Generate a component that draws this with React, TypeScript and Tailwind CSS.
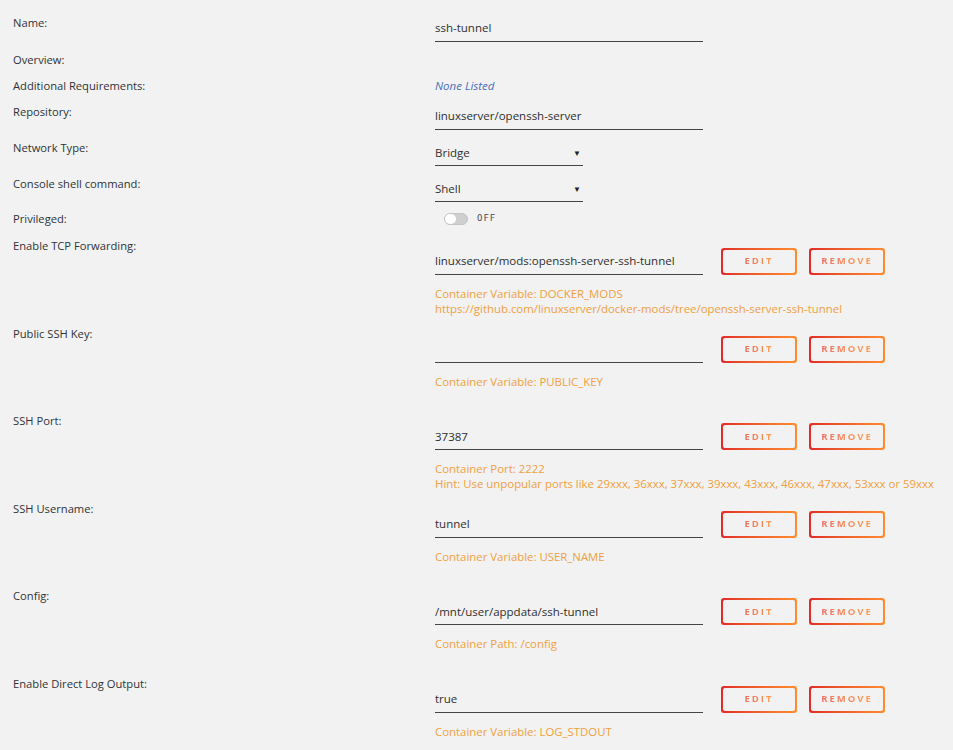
import React from "react";

const font = { fontFamily: '"Open Sans", "Noto Sans", sans-serif' };

type VarRow = {
  label: string;
  value: string;
  notes: string[];
};

const varRows: VarRow[] = [
  {
    label: "Enable TCP Forwarding:",
    value: "linuxserver/mods:openssh-server-ssh-tunnel",
    notes: [
      "Container Variable: DOCKER_MODS",
      "https://github.com/linuxserver/docker-mods/tree/openssh-server-ssh-tunnel",
    ],
  },
  { label: "Public SSH Key:", value: "", notes: ["Container Variable: PUBLIC_KEY"] },
  {
    label: "SSH Port:",
    value: "37387",
    notes: [
      "Container Port: 2222",
      "Hint: Use unpopular ports like 29xxx, 36xxx, 37xxx, 39xxx, 43xxx, 46xxx, 47xxx, 53xxx or 59xxx",
    ],
  },
  { label: "SSH Username:", value: "tunnel", notes: ["Container Variable: USER_NAME"] },
  { label: "Config:", value: "/mnt/user/appdata/ssh-tunnel", notes: ["Container Path: /config"] },
  { label: "Enable Direct Log Output:", value: "true", notes: ["Container Variable: LOG_STDOUT"] },
];

function Label({ children }: { children: React.ReactNode }) {
  return <div className="w-[422px] shrink-0 text-[11.2px] leading-4 text-[#2f3238]">{children}</div>;
}

function TextInput({ value }: { value: string }) {
  return (
    <div className="w-[268px] h-[27px] flex items-center border-b border-[#444] text-[11.5px] text-[#2f2f2f]">
      {value}
    </div>
  );
}

function Select({ value }: { value: string }) {
  return (
    <div className="w-[148px] h-[26px] flex items-center justify-between border-b border-[#444] text-[11.5px] text-[#2f2f2f]">
      <span>{value}</span>
      <span className="text-[8px] text-[#222] pr-[2px]">▼</span>
    </div>
  );
}

function GradButton({ text }: { text: string }) {
  return (
    <div className="w-[76px] h-[27px] rounded-[3px] p-[2px] bg-gradient-to-r from-[#e22828] to-[#ff8c2f]">
      <div className="w-full h-full rounded-[2px] bg-[#f2f2f2] flex items-center justify-center">
        <span className="text-[9.5px] font-bold tracking-[2px] bg-gradient-to-r from-[#f07060] to-[#ffa050] bg-clip-text text-transparent">
          {text}
        </span>
      </div>
    </div>
  );
}

export default function App() {
  return (
    <div className="min-h-screen bg-[#f2f2f2] pl-[13px] pt-[15px]" style={font}>
      <div className="flex h-[37px]">
        <Label>Name:</Label>
        <TextInput value="ssh-tunnel" />
      </div>
      <div className="flex h-[26px]">
        <Label>Overview:</Label>
      </div>
      <div className="flex h-[26px]">
        <Label>Additional Requirements:</Label>
        <div className="text-[11.5px] leading-4 italic text-[#4a6fbc]">None Listed</div>
      </div>
      <div className="flex h-[36px]">
        <Label>Repository:</Label>
        <div className="-mt-px">
          <TextInput value="linuxserver/openssh-server" />
        </div>
      </div>
      <div className="flex h-[36px]">
        <Label>Network Type:</Label>
        <Select value="Bridge" />
      </div>
      <div className="flex h-[35px]">
        <Label>Console shell command:</Label>
        <Select value="Shell" />
      </div>
      <div className="flex h-[27px]">
        <Label>Privileged:</Label>
        <div className="flex items-center h-4 pl-[9px] gap-[9px]">
          <div className="w-[24px] h-[12px] rounded-full bg-[#cfcfcf] border border-[#c4c4c4] flex items-center">
            <div className="w-[11px] h-[10px] rounded-full bg-white"></div>
          </div>
          <span
            className="text-[9px] tracking-[1px] text-[#4a4a55]"
            style={{ fontFamily: '"DejaVu Sans Mono", monospace' }}
          >
            OFF
          </span>
        </div>
      </div>
      {varRows.map((r) => (
        <div key={r.label} className="flex h-[87.6px]">
          <Label>{r.label}</Label>
          <div className="pt-[10px]">
            <div className="flex items-center">
              <TextInput value={r.value} />
              <div className="ml-[18px]">
                <GradButton text="EDIT" />
              </div>
              <div className="ml-[12px]">
                <GradButton text="REMOVE" />
              </div>
            </div>
            <div className="pt-[11px] text-[11.4px] leading-[15px] text-[#f0a040]">
              {r.notes.map((n) => (
                <div key={n}>{n}</div>
              ))}
            </div>
          </div>
        </div>
      ))}
    </div>
  );
}
